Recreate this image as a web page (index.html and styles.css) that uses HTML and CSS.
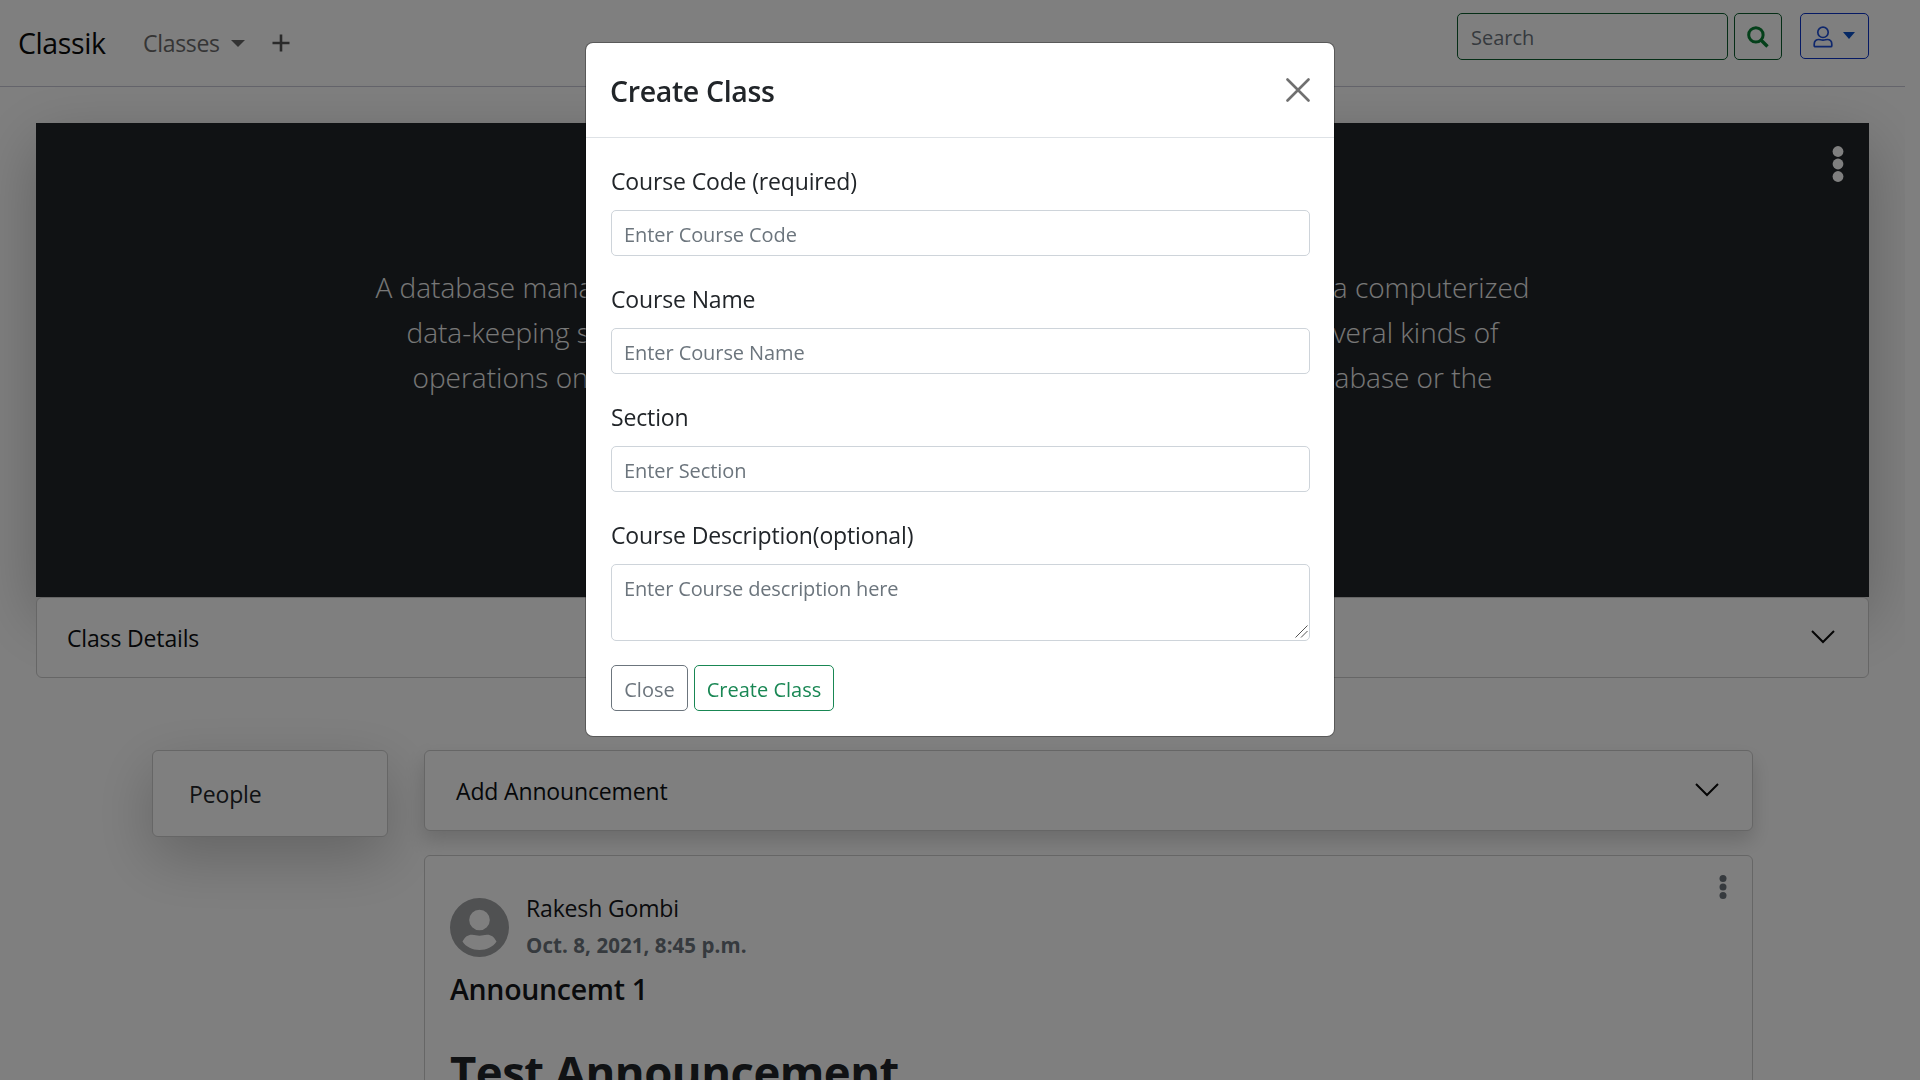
FILE: index.html
```html
<!DOCTYPE html>
<html lang="en">
<head>
<meta charset="utf-8">
<title>Classik</title>
<link rel="stylesheet" href="styles.css">
</head>
<body>
<div class="page">
  <nav class="navbar">
    <div class="nav-left">
      <a class="brand">Classik</a>
      <a class="nav-link">Classes</a>
      <span class="caret"></span>
      <svg class="plus" viewBox="0 0 18 18"><path d="M9 0.5v17M0.5 9h17" stroke="currentColor" stroke-width="2.600" fill="none"/></svg>
    </div>
    <div class="nav-right">
      <input class="search" type="text" placeholder="Search">
      <button class="btn-search" aria-label="Search">
        <svg width="22" height="22" viewBox="0 0 22 22" fill="none" stroke="currentColor"><circle cx="8.900" cy="8.900" r="7.200" stroke-width="3"/><path d="M14.200 14.200l6.300 6.300" stroke-width="3.400"/></svg>
      </button>
      <button class="btn-user" aria-label="Account">
        <svg width="20" height="22" viewBox="0 0 20 22" fill="none" stroke="currentColor" stroke-width="1.700"><circle cx="10" cy="6.300" r="5.200"/><path d="M1.200 18.200c0-3.200 2-4.700 4.600-4.700 1.400 0 2.200.7 4.200.7s2.800-.7 4.200-.7c2.600 0 4.600 1.500 4.600 4.700v1.500a1 1 0 0 1-1 1H2.200a1 1 0 0 1-1-1z"/></svg>
        <span class="caret caret-user"></span>
      </button>
    </div>
  </nav>

  <section class="hero">
    <svg class="hero-dots" viewBox="0 0 12 36" fill="currentColor"><circle cx="6" cy="5.500" r="5.400"/><circle cx="6" cy="18" r="5.400"/><circle cx="6" cy="30.500" r="5.400"/></svg>
    <h1 class="hero-title">Database Management System</h1>
    <div class="hero-text">
      <div class="line line-1"><span>A database management system (DBMS) is</span><span>essentially nothing more than a computerized</span></div>
      <div class="line line-2"><span>data-keeping system. Users of the system</span><span>are given facilities to perform several kinds of</span></div>
      <div class="line line-3"><span>operations on such a system for either</span><span>manipulation of the data in the database or the</span></div>
    </div>
  </section>
  <section class="accordion details">
    <span>Class Details</span>
    <svg class="chevron" viewBox="0 0 24 14"><path d="M1 1l11 11L23 1"/></svg>
  </section>

  <main class="content">
    <aside class="people">People</aside>
    <div class="feed">
      <section class="accordion add">
        <span>Add Announcement</span>
        <svg class="chevron" viewBox="0 0 24 14"><path d="M1 1l11 11L23 1"/></svg>
      </section>
      <article class="post">
        <header class="post-head">
          <svg class="avatar" viewBox="0 0 60 60"><path fill="currentColor" fill-rule="evenodd" d="M29.500 0a29.500 29.500 0 1 0 0 59a29.500 29.500 0 1 0 0-59zM29.500 11.700a10.300 10.300 0 1 1 0 20.600a10.300 10.300 0 1 1 0-20.600zM12.500 43.500C15 38.500 18.500 36.500 22 36.700c3 .2 4.500 1 7.500 1s4.500-.8 7.500-1c3.500-.2 7 1.800 9.500 6.800C43 49 36.500 52 29.500 52S16 49 12.500 43.500z"/></svg>
          <div class="post-meta">
            <div class="author">Rakesh Gombi</div>
            <div class="date">Oct. 8, 2021, 8:45 p.m.</div>
          </div>
          <svg class="post-dots" viewBox="0 0 8 24" fill="currentColor"><circle cx="4" cy="3.600" r="3.500"/><circle cx="4" cy="12" r="3.500"/><circle cx="4" cy="20.400" r="3.500"/></svg>
        </header>
        <h4 class="post-title">Announcemt 1</h4>
        <h1 class="post-body">Test Announcement</h1>
      </article>
    </div>
  </main>
</div>

<div class="backdrop">
  <form class="modal">
    <header class="modal-head">
      <h5>Create Class</h5>
      <svg class="close" viewBox="0 0 24 24"><path d="M1.500 1.500l21 21M22.500 1.500l-21 21"/></svg>
    </header>
    <div class="modal-body">
      <label for="code">Course Code (required)</label>
      <input id="code" class="field" type="text" placeholder="Enter Course Code">
      <label for="name">Course Name</label>
      <input id="name" class="field" type="text" placeholder="Enter Course Name">
      <label for="section">Section</label>
      <input id="section" class="field" type="text" placeholder="Enter Section">
      <label for="desc">Course Description(optional)</label>
      <div class="area-wrap">
        <textarea id="desc" class="field area" placeholder="Enter Course description here"></textarea>
        <svg class="grip" viewBox="0 0 13 13"><path d="M0.500 12.500l12-12M6 12.500l6.500-6.500"/></svg>
      </div>
      <div class="actions">
        <button type="button" class="btn btn-close">Close</button>
        <button type="button" class="btn btn-create">Create Class</button>
      </div>
    </div>
  </form>
</div>
</body>
</html>
```

FILE: styles.css
```css
* { box-sizing: border-box; }
html, body { height: 1080px; overflow: hidden; }
body {
  margin: 0;
  background: #fff;
  color: #212529;
  font: 400 23px "Open Sans", "Noto Sans", sans-serif;
  letter-spacing: -0.150px;
}
h1, h4, h5 { margin: 0; }
input, textarea, button { font: inherit; margin: 0; background: transparent; }
svg { display: block; flex: none; }

.page { width: 1905px; height: 1080px; overflow: hidden; }

/* Navigation */
.navbar {
  display: flex;
  justify-content: space-between;
  height: 87px;
  padding: 0 36px 0 18px;
  border-bottom: 1px solid #c8c8d6;
}
.nav-left { display: flex; align-items: center; height: 86px; }
.brand { width: 125px; color: #0a0a0a; font-size: 28.500px; letter-spacing: -0.400px; }
.nav-link { width: 88px; color: #6b6b6b; letter-spacing: -0.300px; }
.caret {
  border: 7.500px solid transparent;
  border-top: 7.500px solid #666;
  border-bottom: 0;
}
.plus { width: 18px; height: 18px; margin-left: 27px; color: #555; }
.nav-right { display: flex; align-items: flex-start; padding-top: 13px; }
.search {
  width: 271px;
  height: 47px;
  padding: 1px 12px 0 13px;
  border: 1px solid #0a5c2c;
  border-radius: 5px;
  font-size: 20px;
  letter-spacing: 0;
}
.search::placeholder { color: #6c757d; opacity: 1; }
.btn-search, .btn-user { display: flex; align-items: center; border-radius: 5px; padding: 0; }
.btn-search {
  justify-content: center;
  width: 48px;
  height: 47px;
  margin-left: 6px;
  padding-top: 1px;
  border: 1px solid #0a5c2c;
  color: #088034;
}
.btn-user {
  width: 69px;
  height: 46px;
  margin-left: 18px;
  padding-left: 12px;
  padding-top: 1px;
  border: 1px solid #0a32c8;
  color: #1f4fd8;
}
.caret-user { margin: -2px 0 0 10px; border-width: 7px 6.500px 0; border-top-color: #0a50c8; }

/* Course banner */
.hero {
  position: relative;
  height: 474px;
  margin: 36px 36px 0;
  padding-top: 78px;
  background: #212529;
  color: #fff;
  box-shadow: 0 20px 60px rgba(0, 0, 0, 0.250);
}
.hero-dots { position: absolute; top: 22.500px; right: 25px; width: 12px; height: 36px; color: #fff; }
.hero-title { height: 64px; font-size: 48px; font-weight: 400; line-height: 46px; text-align: center; letter-spacing: 1.600px; white-space: nowrap; }
.hero-text { display: flex; flex-direction: column; align-items: center; color: #f0f0f0; font-size: 28px; font-weight: 300; letter-spacing: 0; }
.line { display: flex; justify-content: space-between; height: 45px; line-height: 45px; white-space: nowrap; }
.line-1 { width: 1154px; }
.line-2 { width: 1092px; }
.line-3 { width: 1080px; }

/* Collapsed accordions */
.accordion {
  position: relative;
  display: flex;
  align-items: center;
  justify-content: space-between;
  height: 81px;
  padding: 0 32px 0 30px;
  background: #fff;
  border: 1px solid #ccc;
  border-radius: 6px;
  color: #0c0f12;
}
.details { margin: 0 36px; padding-right: 33px; }
.chevron { width: 24px; height: 14px; margin-top: -1px; fill: none; stroke: #0a0a0a; stroke-width: 2; }

.content { display: flex; align-items: flex-start; gap: 36px; margin: 72px 152px 0; }
.people {
  width: 236px;
  height: 87px;
  padding-left: 36px;
  background: #fff;
  border: 1px solid #ccc;
  border-radius: 6px;
  line-height: 86px;
  box-shadow: 0 20px 60px rgba(0, 0, 0, 0.220);
}
.feed { width: 1329px; }
.add { box-shadow: 0 10px 20px rgba(0, 0, 0, 0.160); padding-right: 33px; padding-left: 31px; }

/* Announcement */
.post {
  position: relative;
  height: 400px;
  margin-top: 24px;
  padding: 34px 25px 0;
  background: #fff;
  border: 1px solid #ccc;
  border-radius: 6px;
}
.post-head { display: flex; }
.avatar { width: 60px; height: 60px; margin: 8px 0 0 -0.500px; color: #a0a2a4; }
.post-meta { margin-left: 16.500px; flex: 1; }
.author { height: 37px; line-height: 36px; color: #14171a; }
.date { height: 36px; line-height: 36px; font-size: 20.500px; font-weight: 700; letter-spacing: 0.070px; color: #6c757d; }
.post-dots { width: 8px; height: 24px; margin: -15px 0 0 0; color: #6c757d; }
.post-title { margin-top: 8px; height: 36px; line-height: 36px; font-size: 28.500px; font-weight: 600; letter-spacing: -0.300px; color: #14171a; }
.post-body { margin-top: 35px; height: 58px; line-height: 58px; font-size: 45.500px; font-weight: 700; letter-spacing: -0.550px; }

/* Dialog */
.backdrop {
  position: fixed;
  inset: 0;
  display: flex;
  justify-content: center;
  align-items: flex-start;
  padding-top: 43px;
  background: rgba(0, 0, 0, 0.500);
}
.modal {
  width: 748px;
  height: 693px;
  background: #fff;
  border-radius: 7px;
  box-shadow: 0 0 0 1px rgba(0, 0, 0, 0.300);
}
.modal-head {
  display: flex;
  align-items: center;
  justify-content: space-between;
  height: 95px;
  padding: 0 24px;
  border-bottom: 1px solid #dee2e6;
}
.modal-head h5 { padding-top: 2px; font-size: 28.500px; font-weight: 600; letter-spacing: -0.350px; }
.close { width: 24px; height: 24px; fill: none; stroke: #707070; stroke-width: 2.600; stroke-linecap: round; }
.modal-body { display: flex; flex-direction: column; padding: 25px 24px 0 25px; }
.modal-body label { height: 36px; margin-bottom: 11px; line-height: 36px; }
.field {
  width: 100%;
  height: 46px;
  margin-bottom: 25px;
  padding: 3px 12px 0;
  border: 1px solid #ced4da;
  border-radius: 5px;
  font-size: 20px;
  letter-spacing: -0.080px;
}
.field::placeholder { color: #6c757d; opacity: 1; }
.area-wrap { position: relative; height: 101px; }
.area { display: block; height: 77px; margin: 0; padding-top: 9px; line-height: 30px; letter-spacing: -0.150px; resize: none; }
.grip { position: absolute; right: 2px; top: 61px; width: 13px; height: 13px; fill: none; stroke: #555; stroke-width: 1; }
.actions { display: flex; gap: 6px; }
.btn { height: 46px; padding: 3px 0 0; border: 1px solid; border-radius: 5px; font-size: 20px; letter-spacing: 0; }
.btn-close { width: 77px; color: #6c757d; }
.btn-create { width: 140px; color: #198754; }
```
